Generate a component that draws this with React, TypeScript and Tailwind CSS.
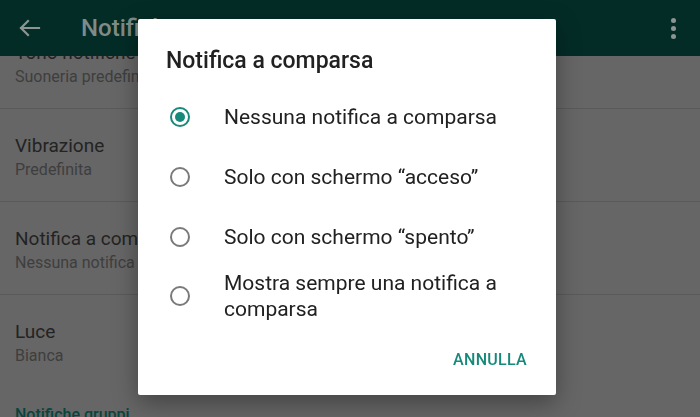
import React, { useState } from 'react';

const settings = [
  { title: 'Tono notifiche', value: 'Suoneria predefinita' },
  { title: 'Vibrazione', value: 'Predefinita' },
  { title: 'Notifica a comparsa', value: 'Nessuna notifica a comparsa' },
  { title: 'Luce', value: 'Bianca' },
];

const options = [
  'Nessuna notifica a comparsa',
  'Solo con schermo “acceso”',
  'Solo con schermo “spento”',
  'Mostra sempre una notifica a comparsa',
];

const Radio: React.FC<{ checked: boolean }> = ({ checked }) => (
  <span
    className={`flex h-[20px] w-[20px] shrink-0 items-center justify-center rounded-full border-2 ${
      checked ? 'border-[#16897a]' : 'border-[#7a7a7a]'
    }`}
  >
    {checked && <span className="h-[10px] w-[10px] rounded-full bg-[#16897a]" />}
  </span>
);

const App: React.FC = () => {
  const [selected, setSelected] = useState(0);

  return (
    <div
      className="relative h-[417px] w-[700px] overflow-hidden bg-[#666666]"
      style={{ fontFamily: 'Roboto, "Noto Sans", sans-serif' }}
    >
      {/* dimmed app bar */}
      <div className="relative z-10 flex h-[56px] items-center bg-[#042c27] pl-[18px] pr-[24px]">
        <svg width="24" height="24" viewBox="0 0 24 24" fill="none" stroke="#8b9693" strokeWidth="2.2" strokeLinecap="square">
          <path d="M3 12h18M10 5l-7 7 7 7" />
        </svg>
        <span className="ml-[39px] text-[24px] font-medium text-[#7f8b88]">Notifiche</span>
        <div className="ml-auto flex flex-col gap-[3px]">
          <span className="h-[5px] w-[5px] rounded-full bg-[#8b9693]" />
          <span className="h-[5px] w-[5px] rounded-full bg-[#8b9693]" />
          <span className="h-[5px] w-[5px] rounded-full bg-[#8b9693]" />
        </div>
      </div>

      {/* dimmed settings list */}
      <div className="-mt-[40px]">
        {settings.map((s, i) => (
          <div
            key={s.title}
            className={`px-[15px] pt-[24px] pb-[20px] ${i < settings.length - 1 ? 'border-b border-[#5a5a5a]' : ''}`}
          >
            <div className="text-[19px] leading-[26px] text-[#232323]">{s.title}</div>
            <div className="text-[16px] leading-[22px] text-[#3e3e3e]">{s.value}</div>
          </div>
        ))}
        <div className="px-[15px] pt-[18px] text-[16px] font-medium leading-[20px] text-[#0a443b]">
          Notifiche gruppi
        </div>
      </div>

      {/* dialog */}
      <div className="fixed inset-0 z-20 flex items-center justify-center pr-[6px] pb-[3px]">
        <div className="flex h-[376px] w-[418px] flex-col rounded-[2px] bg-white shadow-[0_8px_24px_rgba(0,0,0,0.35)]">
          <h2 className="pl-[28px] pt-[28px] text-[23px] font-medium leading-[28px] text-[#212121]">
            Notifica a comparsa
          </h2>
          <div className="mt-[12px] flex flex-col">
            {options.map((o, i) => (
              <button
                key={o}
                onClick={() => setSelected(i)}
                className={`flex items-center gap-[34px] pl-[32px] pr-[24px] text-left ${
                  i === options.length - 1 ? 'py-[3px]' : 'py-[17px]'
                }`}
              >
                <Radio checked={selected === i} />
                <span className="text-[21px] leading-[26px] text-[#212121]">{o}</span>
              </button>
            ))}
          </div>
          <div className="flex justify-end pr-[29px] pt-[17px]">
            <button className="h-[36px] text-[16px] font-medium tracking-[0.3px] text-[#16897a]">ANNULLA</button>
          </div>
        </div>
      </div>
    </div>
  );
};

export default App;
